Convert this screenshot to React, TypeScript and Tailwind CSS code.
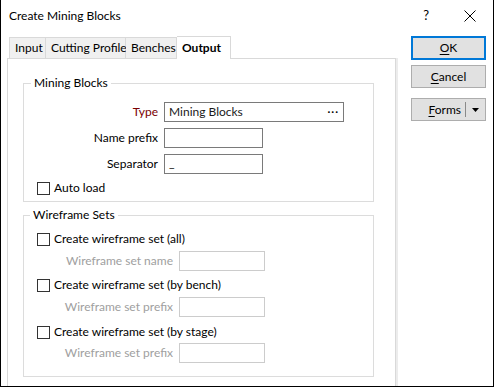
import React from "react";

const font = { fontFamily: 'Lato, "Noto Sans", "Liberation Sans", sans-serif' };

const Checkbox = ({ label }: { label: string }) => (
  <label className="flex items-center h-[14px]">
    <span className="w-[13px] h-[13px] border border-[#333333] bg-white shrink-0" />
    <span className="ml-[4px] text-black leading-none whitespace-nowrap">{label}</span>
  </label>
);

const DisabledField = ({ label }: { label: string }) => (
  <div className="flex items-center h-[20px]">
    <span className="w-[142px] text-right text-[#a0a0a0] pr-[6px] whitespace-nowrap">{label}</span>
    <span className="w-[86px] h-[20px] border border-[#cccccc] bg-white" />
  </div>
);

export default function App() {
  return (
    <div
      className="relative w-[494px] h-[387px] overflow-hidden bg-white border-x border-b border-black text-[12px] text-black"
      style={font}
    >
      {/* Title bar */}
      <div className="flex items-center h-[31px] pl-[8px]">
        <span>Create Mining Blocks</span>
        <span className="ml-auto mr-[35px] text-[13px]">?</span>
        <svg width="12" height="12" viewBox="0 0 12 12" className="mr-[17px]">
          <path d="M0.5 0.5 L11.5 11.5 M11.5 0.5 L0.5 11.5" stroke="#000" strokeWidth="1" />
        </svg>
      </div>

      <div className="flex">
        {/* Tabs + panel */}
        <div className="ml-[6px] w-[389px] flex flex-col">
          <div className="flex items-end h-[27px] pl-[2px] whitespace-nowrap">
            <div className="shrink-0 h-[21px] w-[37px] pl-[5px] flex items-center bg-[#f0f0f0] border border-b-0 border-[#d9d9d9]">Input</div>
            <div className="shrink-0 h-[21px] w-[80px] pl-[5px] flex items-center bg-[#f0f0f0] border border-l-0 border-b-0 border-[#d9d9d9]">Cutting Profile</div>
            <div className="shrink-0 h-[21px] w-[51px] pl-[5px] flex items-center bg-[#f0f0f0] border border-l-0 border-b-0 border-[#d9d9d9]">Benches</div>
            <div className="shrink-0 h-[23px] w-[54px] pl-[5px] flex items-center bg-white border border-l-0 border-b-0 border-[#d9d9d9] font-bold -mb-px relative">Output</div>
          </div>
          <div className="h-[400px] border border-[#d9d9d9] shadow-[2px_0_0_#ececec] pl-[15px] pt-[16px]">
            <fieldset className="w-[351px] h-[127px] border border-[#dcdcdc]">
              <legend className="ml-[7px] px-[3px] leading-[16px]">Mining Blocks</legend>
              <div className="flex flex-col gap-[6px] mt-[11px]">
                <div className="flex items-center h-[20px]">
                  <span className="w-[140px] text-right pr-[6px] text-[#7a0000]">Type</span>
                  <div className="w-[180px] h-[20px] border border-[#7a7a7a] flex items-center px-[4px]">
                    <span className="text-[#1a1a1a]">Mining Blocks</span>
                    <span className="ml-auto font-bold tracking-[1px] -mt-[6px]">...</span>
                  </div>
                </div>
                <div className="flex items-center h-[20px]">
                  <span className="w-[140px] text-right pr-[6px]">Name prefix</span>
                  <div className="w-[99px] h-[20px] border border-[#7a7a7a]" />
                </div>
                <div className="flex items-center h-[20px]">
                  <span className="w-[140px] text-right pr-[6px]">Separator</span>
                  <div className="w-[99px] h-[20px] border border-[#7a7a7a] px-[4px] leading-[16px]">_</div>
                </div>
                <div className="ml-[13px] mt-[1px]">
                  <Checkbox label="Auto load" />
                </div>
              </div>
            </fieldset>

            <fieldset className="mt-[5px] w-[351px] h-[170px] border border-[#dcdcdc]">
              <legend className="ml-[6px] px-[3px] leading-[16px]">Wireframe Sets</legend>
              <div className="flex flex-col ml-[13px] mt-[9px]">
                <Checkbox label="Create wireframe set (all)" />
                <div className="mt-[5px]"><DisabledField label="Wireframe set name" /></div>
                <div className="mt-[7px]"><Checkbox label="Create wireframe set (by bench)" /></div>
                <div className="mt-[5px]"><DisabledField label="Wireframe set prefix" /></div>
                <div className="mt-[8px]"><Checkbox label="Create wireframe set (by stage)" /></div>
                <div className="mt-[4px]"><DisabledField label="Wireframe set prefix" /></div>
              </div>
            </fieldset>
          </div>
        </div>

        {/* Buttons */}
        <div className="ml-[15px] mt-[5px] flex flex-col w-[75px]">
          <button className="h-[24px] border-2 border-[#0078d7] bg-[#e1e1e1] text-center">
            <span className="underline underline-offset-2">O</span>K
          </button>
          <button className="mt-[5px] h-[23px] border border-[#adadad] bg-[#e1e1e1] text-center">
            <span className="underline underline-offset-2">C</span>ancel
          </button>
          <button className="mt-[10px] h-[23px] border border-[#adadad] bg-[#e1e1e1] flex items-center">
            <span className="flex-1 text-right pr-[4px]">
              <span className="underline underline-offset-2">F</span>orms
            </span>
            <span className="w-px h-[15px] bg-[#8a8a8a]" />
            <svg width="19" height="8" viewBox="0 0 19 8">
              <path d="M6 2 L13 2 L9.5 6 Z" fill="#000" />
            </svg>
          </button>
        </div>
      </div>
    </div>
  );
}
